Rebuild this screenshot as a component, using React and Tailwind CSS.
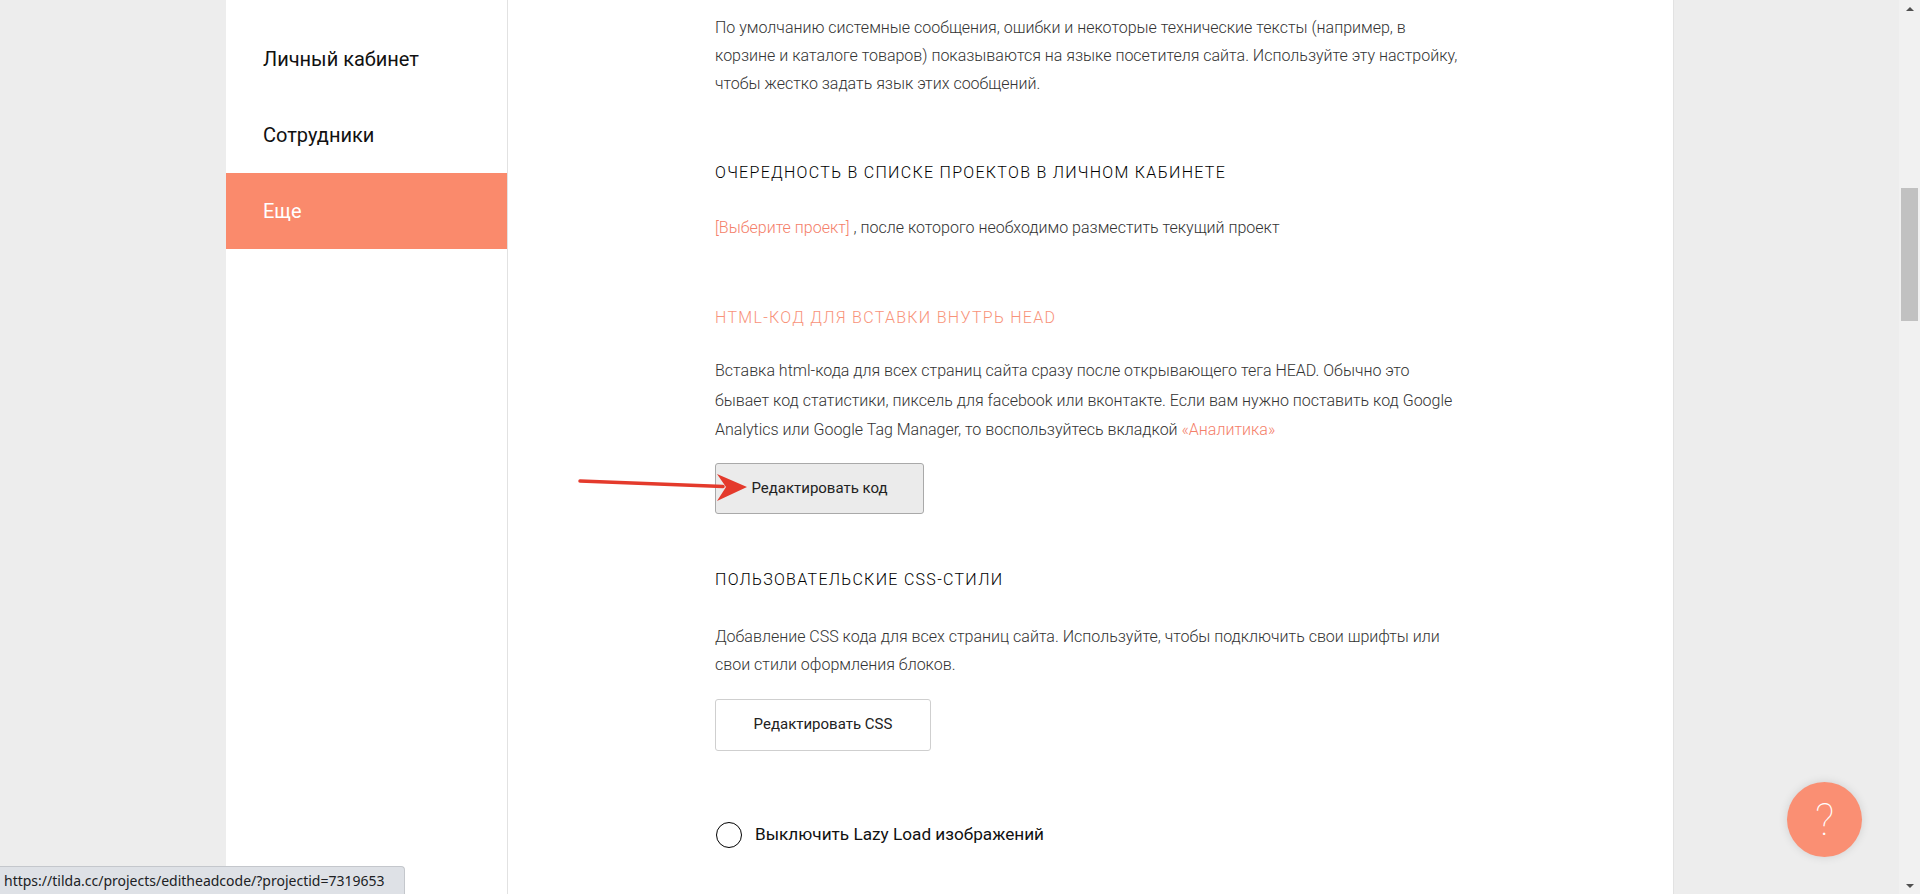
import React from "react";

const NAV = [
  { label: "Личный кабинет", active: false },
  { label: "Сотрудники", active: false },
  { label: "Еще", active: true },
];

function Heading({ children, accent, className = "" }) {
  return (
    <h3
      className={`text-[16px] font-light uppercase leading-[20px] tracking-[1.3px] ${
        accent ? "text-[#f8937a]" : "text-black"
      } ${className}`}
    >
      {children}
    </h3>
  );
}

function Scrollbar() {
  return (
    <div className="flex w-[21px] shrink-0 flex-col bg-[#f1f1f1]">
      <div className="flex h-[17px] items-center justify-center pl-[1px]">
        <div className="h-0 w-0 border-x-[4px] border-b-[4px] border-x-transparent border-b-[#505050]" />
      </div>
      <div className="h-[171px]" />
      <div className="mx-[2px] h-[133px] bg-[#c1c1c1]" />
      <div className="flex-1" />
      <div className="flex h-[17px] items-center justify-center pl-[1px]">
        <div className="h-0 w-0 border-x-[4px] border-t-[4px] border-x-transparent border-t-[#505050]" />
      </div>
    </div>
  );
}

export default function App() {
  return (
    <div className="relative flex h-[894px] w-[1920px] overflow-hidden bg-[#ededed] font-['Roboto',sans-serif]">
      <div className="w-[226px] shrink-0" />

      <aside className="w-[282px] shrink-0 border-r border-[#e2e2e2] bg-white pt-[21px]">
        {NAV.map((item) => (
          <div
            key={item.label}
            className={`flex h-[76px] items-center pl-[37px] text-[20px] ${
              item.active ? "bg-[#fa8a6c] text-white" : "text-[#111]"
            }`}
          >
            {item.label}
          </div>
        ))}
      </aside>

      <main className="w-[1166px] shrink-0 border-r border-[#e2e2e2] bg-white pl-[207px] pt-[14px] text-[16px] font-light text-[#333]">
        <p className="whitespace-nowrap leading-[28px]">
          По умолчанию системные сообщения, ошибки и некоторые технические тексты (например, в
          <br />
          корзине и каталоге товаров) показываются на языке посетителя сайта. Используйте эту настройку,
          <br />
          чтобы жестко задать язык этих сообщений.
        </p>

        <Heading className="mt-[65px]">Очередность в списке проектов в личном кабинете</Heading>
        <p className="mt-[30px] whitespace-nowrap leading-[30px]">
          <span className="text-[#f4806a]">[Выберите проект]</span> , после которого необходимо разместить текущий проект
        </p>

        <Heading accent className="mt-[65px]">
          HTML-код для вставки внутрь HEAD
        </Heading>
        <p className="mt-[28px] whitespace-nowrap leading-[29.5px]">
          Вставка html-кода для всех страниц сайта сразу после открывающего тега HEAD. Обычно это
          <br />
          бывает код статистики, пиксель для facebook или вконтакте. Если вам нужно поставить код Google
          <br />
          Analytics или Google Tag Manager, то воспользуйтесь вкладкой{" "}
          <span className="text-[#f4806a]">«Аналитика»</span>
        </p>
        <button className="mt-[18px] flex h-[51px] w-[209px] items-center justify-center rounded-[3px] border border-[#a9a9a9] bg-[#ebebeb] text-[15px] font-normal text-[#222]">
          Редактировать код
        </button>

        <Heading className="mt-[56px]">Пользовательские CSS-стили</Heading>
        <p className="mt-[33px] whitespace-nowrap leading-[28px]">
          Добавление CSS кода для всех страниц сайта. Используйте, чтобы подключить свои шрифты или
          <br />
          свои стили оформления блоков.
        </p>
        <button className="mt-[20px] flex h-[52px] w-[216px] items-center justify-center rounded-[3px] border border-[#cfcfcf] bg-white text-[15px] font-normal text-[#222]">
          Редактировать CSS
        </button>

        <label className="mt-[71px] flex items-center gap-[13px] pl-[1px]">
          <span className="h-[26px] w-[26px] rounded-full border-[1.5px] border-black" />
          <span className="text-[17.2px] font-normal text-[#111]">Выключить Lazy Load изображений</span>
        </label>
      </main>

      <div className="flex-1" />
      <Scrollbar />

      <svg
        className="absolute left-[575px] top-[468px]"
        width="180"
        height="40"
        viewBox="0 0 180 40"
      >
        <path d="M5 13 L148 18.5" stroke="#e43a2c" strokeWidth="3.5" strokeLinecap="round" fill="none" />
        <polygon points="142,6 172,19 142,33 151,19" fill="#e43a2c" />
      </svg>

      <div className="absolute left-[1787px] top-[782px] flex h-[75px] w-[75px] items-center justify-center rounded-full bg-[#fa8f73] text-[44px] font-thin leading-none text-white shadow-[0_0_10px_rgba(0,0,0,0.12)]">
        ?
      </div>

      <div className="absolute bottom-0 left-0 flex h-[28px] w-[405px] items-center rounded-tr-[4px] border-r border-t border-[#c4c7cc] bg-[#dee1e6] pl-[4px] font-['Noto_Sans',sans-serif] text-[14px] text-[#202124]">
        https://tilda.cc/projects/editheadcode/?projectid=7319653
      </div>
    </div>
  );
}
